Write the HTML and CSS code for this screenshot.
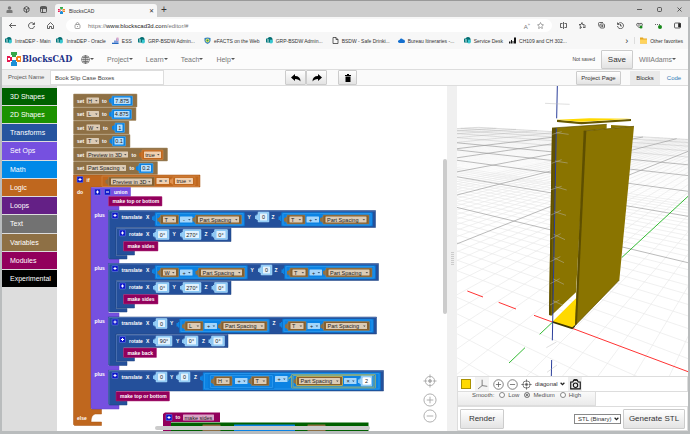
FILE: index.html
```html
<!DOCTYPE html>
<html lang="en">
<head>
<meta charset="utf-8">
<title>BlocksCAD</title>
<link rel="stylesheet" href="styles.css">
</head>
<body>
<svg class="defs" aria-hidden="true">
  <symbol id="logo" viewBox="0 0 14 14">
    <path fill="#35a94a" d="M4 0h6v3H9v2H5V3H4z"/><path fill="#e5184f" d="M0 4h3v1h2v4H3v1H0z"/>
    <path fill="#f58220" d="M14 4h-4v1H9v4h1v1h4z"/><path fill="#1b8fd6" d="M4 14h6v-4H9V8H5v2H4z"/>
    <path fill="#fff" d="M1 6h2v2H1zM11 6h2v2h-2zM6 6h2v2H6z"/>
  </symbol>
  <symbol id="share" viewBox="0 0 14 14"><circle cx="8" cy="5" r="5" fill="#036c70"/><circle cx="10" cy="9" r="4" fill="#37c6d0"/><rect y="3" width="8" height="8" rx="1" fill="#03787c"/><path d="M5.500 5H3v2h2v2H2.500" stroke="#fff" fill="none"/></symbol>
</svg>

<div class="tabs">
  <svg class="ic" viewBox="0 0 14 14"><circle cx="7" cy="4" r="3.500" fill="#777"/><path d="M1 14V10q0-2 2-2h8q2 0 2 2v4z" fill="#777"/></svg>
  <svg class="ic line" viewBox="0 0 14 14"><path d="M7 1l5 3v6l-5 3-5-3V4zM2 4l5 3 5-3M7 7v6"/></svg>
  <svg class="ic line" viewBox="0 0 14 14"><rect x="1" y="1" width="12" height="12" rx="2"/><path d="M1 3h12M1 5h12M5 5v8"/></svg>
  <div class="tab"><svg class="ic"><use href="#logo"/></svg><span>BlocksCAD</span><button class="plain" aria-label="Close tab">✕</button></div>
  <button class="plain plus" aria-label="New tab">+</button>
  <div class="wincontrols">
    <svg class="ic line" viewBox="0 0 14 14"><path d="M2 7h10"/></svg>
    <svg class="ic line" viewBox="0 0 14 14"><rect x="3" y="3" width="8" height="8" rx="2"/></svg>
    <svg class="ic line" viewBox="0 0 14 14"><path d="M3 3l8 8M11 3l-8 8"/></svg>
  </div>
</div>

<div class="address">
  <svg class="ic line" viewBox="0 0 14 14"><path d="M14 7H1M6 2L1 7l5 5"/></svg>
  <svg class="ic line" viewBox="0 0 14 14"><path d="M12 4A6 6 0 1 0 13 8M13 1v4H9"/></svg>
  <svg class="ic line" viewBox="0 0 14 14"><path d="M1 7l6-6 6 6v6H9V9H5v4H1z"/></svg>
  <div class="url">
    <svg class="ic line dim" viewBox="0 0 14 14"><rect x="2" y="5" width="10" height="8" rx="2"/><path d="M4 5V3q3-4 6 0v2M7 8v2"/></svg>
    <span>https://<b>www.blockscad3d.com</b>/editor/#</span>
    <span class="read">A<sup>»</sup></span>
    <svg class="ic line dim" viewBox="0 0 14 14"><path d="M7 1l2 4 4 .5-3 3 .7 4.500L7 11l-3.700 2L4 8.500l-3-3L5 5z"/></svg>
  </div>
  <div class="tools">
    <svg class="ic line" viewBox="0 0 14 14"><path d="M7 0v14M5 3H1v8h4M9 3h4v8H9"/></svg>
    <svg class="ic line" viewBox="0 0 14 14"><path d="M11 5H7L6 1 4 5H0l3 3-1 5 4-3M8 8h6M8 11h5"/></svg>
    <svg class="ic line" viewBox="0 0 14 14"><rect x="4" y="4" width="9" height="8" rx="2"/><path d="M2 9L1 3q0-2 2-2h7M6 8h5M8.500 6v4"/></svg>
    <svg class="ic line" viewBox="0 0 14 14"><path d="M2 4a6 6 0 1 1-1 4M1 1v4h4M7 4v4h3"/></svg>
    <svg class="ic line" viewBox="0 0 14 14"><path d="M7 12L1 6q0-5 6-3 6-2 6 3zM4 6h5"/><circle cx="10" cy="10" r="3" fill="#188a1c" stroke="none"/></svg>
    <svg class="ic line" viewBox="0 0 14 14"><path d="M0 5h2M4 5h2M8 5h2"/><circle cx="10" cy="10" r="4" fill="#188a1c" stroke="none"/></svg>
    <svg class="ic line" viewBox="0 0 14 14"><rect x="1" y="2" width="12" height="10" rx="2"/><path d="M9 3h4v7H9z" fill="#222"/></svg>
  </div>
</div>

<nav class="bookmarks" aria-label="Favorites">
  <a href="#"><svg><use href="#share"/></svg>IntraDEP - Main</a>
  <a href="#"><svg><use href="#share"/></svg>IntraDEP - Oracle</a>
  <a href="#"><svg viewBox="0 0 14 14"><path d="M0 11h4V7h4V3h5v10H0z" fill="#7f9fdc"/><path d="M9 1h4v7H9z" fill="#dda5c8"/><path d="M0 12h13v2H0z" fill="#2469c0"/></svg>ESS</a>
  <a href="#" class="wide"><svg><use href="#share"/></svg>GRP-BSDW Admin...</a>
  <a href="#"><svg viewBox="0 0 14 14"><path d="M1 2l6-1 6 1v6q-1 4-6 6-5-2-6-6z" fill="#2f80c4"/><circle cx="7" cy="7" r="4" fill="#e8e46a"/><circle cx="7" cy="7" r="2" fill="#2a9a50"/></svg>eFACTS on the Web</a>
  <a href="#" class="wide"><svg><use href="#share"/></svg>GRP-BSDW Admin...</a>
  <a href="#" class="wide"><svg class="line" viewBox="0 0 14 14"><path d="M2 1h6l4 4v8H2zM8 1v4h4"/></svg>BSDW - Safe Drinki...</a>
  <a href="#" class="wide"><svg viewBox="0 0 14 14"><path d="M3 12q-4-1-3-4 1-2 3-2 3-5 7-1 4 0 4 4 0 3-3 3z" fill="#1570cf"/></svg>Bureau Itineraries -...</a>
  <a href="#"><svg><use href="#share"/></svg>Service Desk</a>
  <a href="#" class="wide"><svg viewBox="0 0 14 14"><path d="M0 9h3v4H0zM4 6h2v7H4zM7 8h2v5H7zM10 1h4v12h-4z" fill="#111"/></svg>CH109 and CH 302...</a>
  <span class="more">›</span>
  <a href="#" class="other"><svg viewBox="0 0 14 14"><path d="M0 1h6l1 2h7v10H0z" fill="#e5a823"/><path d="M0 5h14v8H0z" fill="#ffd35c"/></svg>Other favorites</a>
</nav>

<main class="app">
  <header class="header">
    <a class="brand" href="#"><svg><use href="#logo"/></svg>BlocksCAD</a>
    <nav class="menu">
      <a href="#" aria-label="Language"><svg class="globe" viewBox="0 0 18 18"><path d="M9 1a8 8 0 1 0 0 16A8 8 0 1 0 9 1M9 1v16M1 9h16M3 5h12M3 13h12M9 1Q2 9 9 17M9 1q7 8 0 16"/></svg><i></i></a>
      <a href="#">Project<i></i></a><a href="#">Learn<i></i></a><a href="#">Teach<i></i></a><a href="#">Help<i></i></a>
    </nav>
    <div class="account"><span>Not saved</span><button class="btn save">Save</button><a href="#">WillAdams<i></i></a></div>
  </header>

  <div class="projectbar">
    <label for="name">Project Name</label><input id="name" value="Book Slip Case Boxes">
    <div class="history">
      <button class="btn" aria-label="Undo"><svg viewBox="0 0 20 16"><path d="M0 7l8-7v4q11 0 11 11-3-5-11-5v4z"/></svg></button><button class="btn" aria-label="Redo"><svg viewBox="0 0 20 16"><path d="M20 7l-8-7v4Q1 4 1 15q3-5 11-5v4z"/></svg></button>
      <button class="btn trash" aria-label="Delete"><svg viewBox="0 0 20 16"><path d="M4 2h4V0h4v2h4v2H4zM5 5h10v11H5z"/></svg></button>
    </div>
    <div class="views"><button class="btn">Project Page</button><button class="view active">Blocks</button><button class="view code">Code</button></div>
  </div>

  <div class="editor">
    <nav class="palette">
      <a href="#" class="shape3">3D Shapes</a><a href="#" class="shape2">2D Shapes</a><a href="#" class="transforms">Transforms</a><a href="#" class="setops">Set Ops</a><a href="#" class="math">Math</a><a href="#" class="logic">Logic</a><a href="#" class="loops">Loops</a><a href="#" class="text">Text</a><a href="#" class="variables">Variables</a><a href="#" class="modules">Modules</a><a href="#" class="experimental">Experimental</a>
    </nav>
    <section class="workspace" aria-label="Blocks workspace">
      <svg id="blocks" viewBox="114 172 780 690" preserveAspectRatio="xMinYMin slice"></svg>
      <div class="vscroll"></div><div class="hscroll"></div>
      <div class="zoom">
        <button class="plain" aria-label="Center"><svg viewBox="0 0 30 30"><circle cx="15" cy="15" r="10"/><circle cx="15" cy="15" r="3" fill="#aaa"/><path d="M15 1v8M15 21v8M1 15h8M21 15h8"/></svg></button>
        <button class="plain" aria-label="Zoom in"><svg viewBox="0 0 30 30"><circle cx="15" cy="15" r="13"/><path d="M8 15h14M15 8v14"/></svg></button>
        <button class="plain" aria-label="Zoom out"><svg viewBox="0 0 30 30"><circle cx="15" cy="15" r="13"/><path d="M8 15h14"/></svg></button>
      </div>
    </section>
    <div class="divider"><span></span></div>
    <section class="viewer">
      <svg id="scene" viewBox="6 3 693 870" preserveAspectRatio="xMinYMin slice" role="img" aria-label="Rendered slip case">
        <g id="grid"></g>
        <path class="red" d="M352 730L699 860M237 691l55 20M131 652l52 20M37 618l47 18"/>
        <path class="green" d="M292 712l-38 36M210 788l-48 46M500 518L699 334"/>
        <path fill="#ffd900" d="M292 710L363 640V715L352 730z"/>
        <path fill="#403600" d="M292 708l60 19 8-7v5l-8 8-60-20z"/>
        <path fill="#8a7400" d="M291 129L455 118V131L390 138 363 622 293 688 290 692 282 690z"/>
        <path fill="#5e4f00" d="M291 130h6L288 691l-6-1zM297 129l6 0-10 559-3 3z"/>
        <path fill="#8a7400" d="M468 120L537 124 468 130z"/>
        <path fill="#8a7400" d="M386 138L537 124 493 585 360 722z"/>
        <path fill="#5e4f00" d="M386 138h8L366 716l-6 7z"/>
        <path stroke="#5e4f00" stroke-width="2" fill="none" d="M386 138L537 124M493 585L360 722M291 129L455 118"/>
        <path fill="#675800" d="M306 104l73 7 149-9v6l-149 10-73-7z"/>
        <path fill="#ffd900" d="M306 104l97-4 125 1-149 9z"/>
        <path stroke="#2b3f9b" stroke-width="3" d="M307 3L305 100M304 130L292 766M290 825l-1 48"/>
        <path class="ticks" d="M270 55l74 3M292 148l28-8M303 143l38 5M290 235l30-11M300 228l38 6M288 314l32-10M300 305l35 10M288 390l30-14M298 380l35 11M287 462l30-16M296 448l34 16M286 530l30-15M296 518l31 15M286 596l28-15M295 582l32 16M285 660l28-15M294 647l30 14M274 788l30-17M276 862l30-22"/>
      </svg>
      <div class="viewtools">
        <button class="plain swatch" aria-label="Color"><span></span></button>
        <button class="plain axes" aria-label="Axes"><svg viewBox="0 0 30 30"><path d="M14 2v16l14 2M14 18L3 27"/></svg></button>
        <button class="plain" aria-label="Zoom in"><svg viewBox="0 0 30 30"><circle cx="15" cy="15" r="13"/><path d="M8 15h14M15 8v14"/></svg></button>
        <button class="plain" aria-label="Zoom out"><svg viewBox="0 0 30 30"><circle cx="15" cy="15" r="13"/><path d="M8 15h14"/></svg></button>
        <button class="plain" aria-label="Reset view"><svg viewBox="0 0 30 30"><circle cx="15" cy="15" r="10"/><circle cx="15" cy="15" r="3" fill="#555"/><path d="M15 1v8M15 21v8M1 15h8M21 15h8"/></svg></button>
        <select aria-label="View angle"><option>diagonal</option></select>
        <button class="plain camera" aria-label="Snapshot"><svg viewBox="0 0 30 30"><path d="M2 8h6l2-5h10l2 5h6v19H2z"/><circle cx="15" cy="17" r="6"/><path d="M11 2h8"/></svg></button>
      </div>
      <fieldset class="smooth"><span>Smooth:</span><label><input type="radio" name="s">Low</label><label><input type="radio" name="s" checked>Medium</label><label><input type="radio" name="s">High</label></fieldset>
      <div class="output"><button class="btn">Render</button><select aria-label="Format"><option>STL (Binary)</option></select><button class="btn">Generate STL</button></div>
    </section>
  </div>
</main>
<script src="script.js"></script>
</body>
</html>
```
FILE: styles.css
```css
* { box-sizing: border-box; }
body {
  margin: 0;
  min-height: 100vh;
  display: flex;
  flex-direction: column;
  padding: 0 2px 3px;
  background: #b9bcbd;
  font-family: "Liberation Sans", Arial, sans-serif;
  font-size: 7px;
  color: #333;
}
a { color: inherit; text-decoration: none; }
button, input, select { font: inherit; color: inherit; margin: 0; }
.plain { border: 0; padding: 0; background: none; display: flex; align-items: center; justify-content: center; }
.defs { position: absolute; width: 0; height: 0; }
.ic { width: 7px; height: 7px; flex: none; display: block; }
.line { fill: none; stroke: #333; stroke-width: 1.5; }
.dim { stroke: #888; }

.tabs { height: 17px; flex: none; display: flex; align-items: center; border-top: 1px solid #999; background: #cdcdcd; padding-left: 6px; gap: 10px; margin: 0 -2px; }
.tab { align-self: flex-end; height: 13px; width: 102px; margin-left: -2px; padding: 0 3px; background: #f7f7f7; border-radius: 3px 3px 0 0; display: flex; align-items: center; gap: 4px; font-size: 5px; }
.tab .plain { margin-left: auto; font-size: 6px; }
.plus { font-size: 10px; margin-left: -6px; }
.wincontrols { margin-left: auto; display: flex; gap: 13px; padding-right: 7px; }

.address { height: 17px; flex: none; display: flex; align-items: center; gap: 12px; padding: 0 7px; background: #f7f7f7; }
.url { flex: 1; height: 13px; margin: 0 -6px 0 0; padding: 0 8px; border-radius: 7px; background: #fff; display: flex; align-items: center; gap: 7px; font-size: 6px; color: #777; }
.url b { font-weight: 400; color: #222; }
.read { margin-left: auto; }
.read sup { font-size: 4px; }
.tools { display: flex; gap: 12px; margin-left: 2px; }

.bookmarks { height: 15px; flex: none; display: flex; align-items: center; gap: 6px; padding: 0 5px 2px 3px; background: #f7f7f7; font-size: 5px; color: #333; white-space: nowrap; }
.bookmarks a { display: flex; align-items: center; gap: 3px; }
.bookmarks .wide { width: 60px; }
.bookmarks svg { width: 7px; height: 7px; flex: none; }
.more { margin-left: auto; font-size: 9px; }
.bookmarks .other { border-left: 1px solid #ddd; padding-left: 5px; }

.app { flex: 1; display: flex; flex-direction: column; background: #fff; min-height: 0; }
.app i { border: solid transparent; border-width: 2px 2px 0; border-top-color: #555; display: inline-block; }
.header { height: 21px; flex: none; display: flex; align-items: center; border-bottom: 1px solid #ddd; background: #fcfcfc; color: #777; }
.brand { display: flex; align-items: center; gap: 1px; margin-left: 5px; width: 74px; color: #1b2f86; font: bold 9px/12px "DejaVu Serif Condensed", "DejaVu Serif", serif; font-stretch: condensed; }
.brand svg { width: 14px; height: 14px; flex: none; }
.menu { display: flex; gap: 13px; }
.menu a, .account a { display: flex; align-items: center; }
.globe { width: 9px; height: 9px; fill: none; stroke: #666; stroke-width: 1.5; }
.account { margin-left: auto; display: flex; align-items: center; gap: 6px; padding-right: 12px; }
.account span { font-size: 5px; color: #444; }
.btn { border: 1px solid #ccc; border-radius: 1px; background: linear-gradient(#fff, #e3e3e3); color: #333; display: flex; align-items: center; justify-content: center; padding: 0; white-space: nowrap; }
.save { width: 32px; height: 19px; font-size: 8px; }

.projectbar { height: 16px; flex: none; display: flex; align-items: center; background: #fafafa; border-bottom: 1px solid #ddd; font-size: 6px; }
.projectbar label { width: 48px; height: 15px; line-height: 15px; padding-left: 6px; background: #eee; color: #555; }
.projectbar input { width: 114px; height: 15px; border: 1px solid #ddd; padding: 0 4px; color: #444; }
.history { display: flex; margin-left: 121px; }
.history .btn { width: 21px; height: 15px; }
.history .trash { width: 19px; margin-left: 11px; }
.history svg { width: 10px; height: 8px; }
.views { margin-left: auto; display: flex; }
.views .btn { width: 45px; height: 14px; margin-right: 9px; }
.view { width: 30px; height: 14px; border: 0; padding: 0; background: none; color: #337ab7; }
.code { width: 28px; }
.active { background: #eaeaea; color: #333; }

.editor { flex: 1; display: flex; min-height: 0; }
.palette { width: 55px; flex: none; background: #ddd; display: grid; grid-template-rows: repeat(3, 18px 18px 18px 19px); padding-top: 1px; align-content: start; }
.palette a { padding-left: 8px; line-height: 17px; color: #fff; border-top: 1px solid #ddd; }
.shape3 { background: #006000; } .shape2 { background: #1c9200; } .transforms { background: #26549f; }
.setops { background: #7650e0; } .math { background: #0089e8; } .logic { background: #bf671e; }
.loops { background: #642086; } .text { background: #727272; } .variables { background: #8e7045; }
.modules { background: #92005c; } .experimental { background: #000; }

.workspace { flex: 390; position: relative; min-width: 0; overflow: hidden; }
#blocks { position: absolute; width: 100%; height: 100%; }
#blocks text { font-size: 11px; dominant-baseline: central; }
#blocks .w { fill: #fff; font-weight: bold; font-size: 10px; }
.k { fill: #222; }
.vscroll { position: absolute; right: 0; top: 73px; width: 4px; height: 155px; border-radius: 2px; background: #ccc; }
.hscroll { position: absolute; left: 98px; bottom: 1px; width: 215px; height: 4px; border-radius: 2px; background: #ccc; }
.zoom { position: absolute; right: 10px; bottom: 8px; display: flex; flex-direction: column; gap: 2px; }
.zoom svg { width: 14px; height: 14px; fill: none; stroke: #aaa; stroke-width: 2; }
.zoom button:first-child { margin-bottom: 3px; }
.divider { width: 10px; flex: none; background: #f0f0f0; display: flex; align-items: center; justify-content: center; }
.divider span { width: 3px; height: 13px; background: repeating-linear-gradient(#ccc 0 1px, #eee 1px 2px); }

.viewer { flex: 231; min-width: 0; display: flex; flex-direction: column; }
#scene { flex: 1; width: 100%; min-height: 0; height: 0; background: #fff; }
.red { stroke: #f33; stroke-width: 3; } .green { stroke: #3b3; stroke-width: 3; }
.ticks { stroke: #bbb; stroke-width: 2; opacity: .7; }
.minor { stroke: #e8e8e8; stroke-width: 2; } .far { stroke: #f2f2f2; stroke-width: 1; }
.major { stroke: #999; stroke-width: 2; } .horizon { stroke: #aaa; stroke-width: 1; }
.viewer select { appearance: none; border: 1px solid #fff; color: #333; font-size: 6px; padding: 0 7px 0 0; background: #fff url("data:image/svg+xml,%3Csvg xmlns='http://www.w3.org/2000/svg' viewBox='0 0 8 6'%3E%3Cpath d='M1 1l3 3 3-3' fill='none' stroke='%23222' stroke-width='2'/%3E%3C/svg%3E") no-repeat right 1px center / 5px 4px; }
.viewtools { height: 16px; flex: none; display: flex; align-items: center; border: 1px solid #ddd; padding: 0 1px; }
.viewtools .plain { width: 14px; height: 14px; }
.viewtools svg { width: 11px; height: 11px; fill: none; stroke: #555; stroke-width: 2; }
.viewtools .swatch span { width: 10px; height: 10px; background: #ffd900; border: 1px solid #aa9100; }
.viewtools .axes { margin: 0 2px; background: #f3f3f3; }
.viewtools .camera { margin-left: 1px; background: #eee; }
.viewtools .camera svg { stroke: #111; stroke-width: 3; }
.viewtools select { width: 33px; height: 12px; margin-left: 1px; }
.smooth { align-self: flex-start; width: 139px; height: 14px; flex: none; margin: 0; border: 1px solid #ddd; border-top: 0; background: linear-gradient(#fafafa, #eaeaea); padding: 0 0 0 14px; display: flex; align-items: center; gap: 5px; font-size: 6px; color: #555; }
.smooth label { display: flex; align-items: center; gap: 3px; }
.smooth input { appearance: none; width: 6px; height: 6px; border: 1px solid #888; border-radius: 50%; background: #fff; }
.smooth input:checked { background: #555; box-shadow: inset 0 0 0 1px #fff; }
.output { height: 25px; flex: none; display: flex; align-items: center; border: 1px solid #ddd; padding: 1px 2px; gap: 2px; font-size: 8px; }
.output .btn { height: 20px; width: 44px; }
.output .btn:last-child { width: 62px; }
.output select { margin-left: auto; width: 47px; height: 10px; border-color: #888; padding-left: 3px; }
```
FILE: script.js
```js
// Workspace drawing: the blocks are laid out at twice their displayed size.
const out = [];
const BLUE = '#24509b', MATH = '#0c83e3', TAN = '#8e7045', ORANGE = '#bf671e', PURPLE = '#7650e0', PLUM = '#92005c';
const path = (d, fill, stroke = 'none') => out.push(`<path d="${d}" fill="${fill}" stroke="${stroke}"/>`);
const box = (x, y, w, h, fill, stroke = 'none') => out.push(`<rect x="${x}" y="${y}" width="${w}" height="${h}" rx="1" fill="${fill}" stroke="${stroke}"/>`);
const text = (x, y, s, cls = 'w', anchor = 'start') => out.push(`<text x="${x}" y="${y}" class="${cls}" text-anchor="${anchor}">${s}</text>`);
const arrow = (x, y, c = '#555') => path(`M${x - 2} ${y - 1}h5l-2 3z`, c);
const plug = (x, y, c) => path(`M${x} ${y - 5}h-3v2h-3v7h3v2h3z`, c);

function gear(x, y, s = '+') {
  box(x - 6, y - 6, 12, 12, '#1018c8', '#6f86e8');
  path(s === '+' ? `M${x - 3} ${y - 1}h2v-2h2v2h2v2h-2v2h-2v-2h-2z` : `M${x - 3} ${y - 1}h6v2h-6z`, '#fff');
}
function number(x, cy, w, s) {
  plug(x, cy, '#8cc9f5');
  box(x, cy - 10, w, 20, '#8cc9f5', '#b5ddfa');
  box(x + 4, cy - 7, w - 8, 14, '#e2f2fd');
  text(x + w / 2, cy, s, 'k', 'middle');
}
function variable(x, cy, w, s) {
  plug(x, cy, TAN);
  box(x, cy - 9, w, 18, '#87602f', '#a98a5c');
  box(x + 5, cy - 6, w - 10, 12, '#dccbb5');
  text(x + 8, cy, s, 'k');
  arrow(x + w - 11, cy);
}
function op(x, cy, s, fill = '#a6d6fa') {
  box(x, cy - 6, 25, 12, fill);
  text(x + 8, cy, s, 'k', 'middle');
  arrow(x + 18, cy, '#357');
}
function math(x, y, w, h, stroke = '#3fa4f5') {
  plug(x, y + 11, MATH);
  box(x, y, w, h, MATH, '#0a6fc5');
  box(x + 3, y + 2, w - 6, h - 4, 'none', stroke);
}
function clamp(x, top, right, bottom, foot, end, fill, label) {
  path(`M${x} ${top}H${right}V${bottom}H${x + 15}V${foot}H${x + 37}V${end}H${x + 2}L${x} ${end - 2}z`, fill, '#1c417f');
  path(`M${x + 1} ${end - 2}V${top + 1}H${right - 1}`, 'none', '#6d8fc8');
  gear(x + 13, top + 10);
  text(x + 26, top + 12, label);
}
function call(x, y, w, s) {
  box(x, y, w, 19, PLUM, '#b0307c');
  text(x + 8, y + 9, s);
}
function sum(x, y, w, name, sign, spacing) {
  math(x, y, w, 27);
  const cy = y + 14;
  variable(x + 11, cy, 36, name);
  op(x + 50, cy, sign);
  variable(x + spacing, cy, 92, 'Part Spacing');
}

// Assignments
[['H', 30, 274, '7.875'], ['L', 30, 272, '4.875'], ['W', 32, 258, '1'], ['T', 30, 260, '0.1'], ['Preview in 3D', 88, 335, 'true'], ['Part Spacing', 84, 315, '0.2']].forEach(([name, w, right, value], i) => {
  const y = 188 + i * 27, cy = y + 13, x = 175 + (w > 80 ? w - 4 : w - 5);
  box(147, y, right - 147, 26, TAN, '#a78c65');
  text(154, cy, 'set');
  box(173, cy - 6, w - 5, 12, '#dccbb5');
  text(176, cy, name, 'k'); arrow(173 + w - 11, cy);
  text(x + 4, cy, 'to');
  const vx = value === 'true' ? 284 : { H: 224, L: 224, W: 230, T: 225 }[name] || 278;
  const vw = right - vx - 9, c = value === 'true' ? ORANGE : MATH;
  plug(vx, cy, c);
  box(vx, cy - 9, vw, 19, c, value === 'true' ? '#e0914f' : '#57b4fa');
  box(vx + 4, cy - 6, vw - 8, 13, value === 'true' ? '#f1d0b0' : '#b9dffb');
  text(vx + vw / 2 - (value === 'true' ? 5 : 0), cy, value, 'k', 'middle');
  if (value === 'true') arrow(vx + vw - 10, cy);
});

// Condition
path('M147 350H400V374H182V818H203V828H190Q182 830 182 844H203V851H149L147 849z', ORANGE, '#a85512');
gear(160, 359); text(173, 359, 'if'); text(154, 384, 'do'); text(154, 836, 'else');
box(204, 352, 194, 21, ORANGE, '#df9456');
variable(217, 363, 92, 'Preview in 3D');
op(313, 362, '=', '#f1d0b0');
plug(346, 362, '#e0914f'); box(346, 354, 44, 17, ORANGE, '#e0914f'); box(350, 356, 36, 12, '#f1d0b0'); text(353, 362, 'true', 'k'); arrow(379, 362);

// Union
path('M182 375H261V393H217V412H238V420H217V518H238V527H217V626H238V634H217V731H238V740H217V810H238V818H184L182 816z', PURPLE, '#6440cc');
gear(195, 384); gear(215, 384, '-'); text(228, 384, 'union');
[429, 535, 642, 748].forEach(y => text(189, y, 'plus'));
call(217, 393, 107, 'make top or bottom');

// First two sides
[[0, 'T', '-', 0], [106, 'W', '+', 6]].forEach(([dy, name, sign, dx]) => {
  clamp(217, 421 + dy, 751 + dx, 455 + dy, 511 + dy, 518 + dy, BLUE, 'translate');
  text(292, 433 + dy, 'X'); sum(310, 425 + dy, 179 + dx, name, sign, 81 + dx);
  text(495 + dx, 433 + dy, 'Y'); number(516 + dx, 434 + dy, 22, '0');
  text(543 + dx, 433 + dy, 'Z'); sum(563 + dx, 425 + dy, 182, 'T', '+', 83);
  clamp(232, 456 + dy, 462, 483 + dy, 502 + dy, 510 + dy, BLUE, 'rotate');
  text(292, 468 + dy, 'X'); number(312, 469 + dy, 26, '0°');
  text(345, 468 + dy, 'Y'); number(366, 469 + dy, 36, '270°');
  text(409, 468 + dy, 'Z'); number(429, 469 + dy, 26, '0°');
  call(247, 483 + dy, 69, 'make sides');
});

// Back
clamp(217, 634, 753, 668, 723, 731, BLUE, 'translate');
text(292, 646, 'X'); number(312, 647, 22, '0'); text(340, 646, 'Y'); sum(359, 638, 180, 'L', '+', 83);
text(545, 646, 'Z'); sum(565, 638, 182, 'T', '+', 82);
clamp(232, 669, 456, 695, 714, 722, BLUE, 'rotate');
text(292, 681, 'X'); number(312, 682, 32, '90°'); text(352, 681, 'Y'); number(370, 682, 26, '0°'); text(404, 681, 'Z'); number(423, 682, 26, '0°');
call(247, 696, 66, 'make back');

// Top
clamp(217, 741, 767, 782, 802, 810, BLUE, 'translate');
text(292, 753, 'X'); number(312, 754, 22, '0'); text(340, 753, 'Y'); number(358, 754, 22, '0'); text(388, 753, 'Z');
math(406, 745, 355, 35); math(418, 749, 130, 28);
variable(428, 762, 36, 'H'); op(470, 762, '+'); variable(503, 762, 35, 'T'); op(550, 758, '+');
plug(583, 758, '#f3d43a'); math(583, 749, 168, 27, '#f3d43a');
box(583, 749, 168, 27, 'none', '#f3d43a');
variable(593, 762, 92, 'Part Spacing'); box(593, 753, 92, 18, 'none', '#f3d43a'); op(688, 762, '×');
number(722, 762, 22, ''); box(725, 755, 17, 14, '#fff'); text(733, 762, '2', 'k', 'middle');
call(232, 783, 107, 'make top or bottom');

// Module definition
path('M326 828L330 825H440V844H342V870H326z', PLUM);
gear(338, 835); text(351, 834, 'to'); box(366, 829, 62, 12, '#d9a5c6'); text(369, 835, 'make sides', 'k');
path('M342 845H737V870H342z', '#006000');
box(405, 849, 36, 20, TAN); box(468, 849, 122, 20, MATH); box(615, 849, 36, 20, TAN);
document.getElementById('blocks').innerHTML = out.join('');

// Ground grid: a plane of 100 units each way, projected on two vanishing points.
const A = 0.036, B = 0.051, lines = [];
const project = (u, v) => {
  const d = 1 + u * A + v * B;
  return `${Math.round((292 - 1340 * u * A + 1021 * v * B) / d)} ${Math.round((711 + 45 * u * A + 70 * v * B) / d)}`;
};
const kind = i => i % 10 === 0 ? (i > 50 ? 'horizon' : 'major') : i > 25 ? 'far' : 'minor';
for (let i = -30; i <= 100; i++) {
  if (i === 0) continue;
  const v = Math.max(-100, (-0.88 - A * i) / B), u = Math.max(-100, (-0.88 - B * i) / A);
  lines.push([kind(i), `M${project(i, v)}L${project(i, 100)}`], [kind(i), `M${project(u, i)}L${project(100, i)}`]);
}
const order = ['far', 'minor', 'horizon', 'major'];
lines.sort((a, b) => order.indexOf(a[0]) - order.indexOf(b[0]));
document.getElementById('grid').innerHTML = lines.map(([k, d]) => `<path class="${k}" d="${d}"/>`).join('');
```
